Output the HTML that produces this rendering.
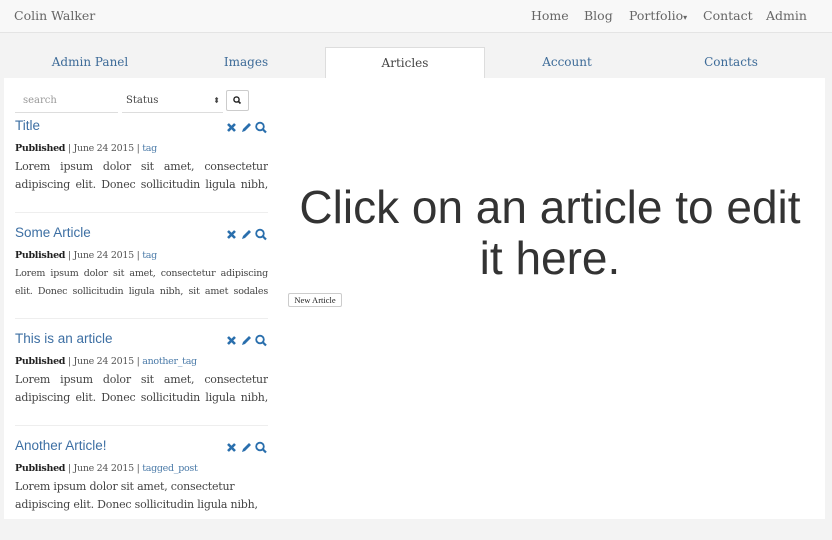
<!DOCTYPE html>
<html><head><meta charset="utf-8"><style>
*{margin:0;padding:0;box-sizing:border-box}
body{width:832px;height:540px;background:#f3f3f3;font-family:"DejaVu Serif","Liberation Serif",serif;position:relative;overflow:hidden}
.nav{position:absolute;left:0;top:0;width:832px;height:33px;background:#f8f8f8;border-bottom:1px solid #e4e4e4;font-size:12.5px;color:#666}
.nav span{position:absolute;top:8px}
.tab{position:absolute;top:47px;height:31px;width:160px;text-align:center;font-size:12px;color:#3d6b98;line-height:30px}
.tab.a{background:#fff;border:1px solid #ddd;border-bottom:none;color:#444}
.main{position:absolute;left:4px;top:78px;width:821px;height:441px;background:#fff}
.in{position:absolute;font-size:10px;color:#999}
.art{position:absolute;left:15px;width:253px}
.t{font-family:"Liberation Sans",sans-serif;font-size:13.5px;color:#3d6fa3;height:26px;line-height:18px}
.m{font-size:9.5px;color:#555;letter-spacing:-0.3px;height:12px;line-height:12px}
.m b{color:#222}.m a{color:#4a7aa8}
.b{font-size:11px;color:#444;line-height:18px;margin-top:3px;text-align:justify;height:39px;overflow:hidden;letter-spacing:-0.2px}
.ic{position:absolute;right:0;top:4px;width:42px;height:13px}
.sep{position:absolute;left:15px;width:253px;height:1px;background:#eee}
.big{position:absolute;left:284px;width:532px;top:182px;text-align:center;font-family:"Liberation Sans",sans-serif;font-size:46px;line-height:51px;color:#333}
</style></head><body>
<svg width="0" height="0" style="position:absolute"><defs><g id="ic"><path d="M2 3 L9 10 M9 3 L2 10" stroke="#2a6fad" stroke-width="2.6"/><path d="M16 11 L17 8 L23 2 L25 4 L19 10 Z" fill="#2a6fad"/><circle cx="34" cy="5.5" r="3.8" fill="none" stroke="#2a6fad" stroke-width="1.8"/><path d="M36.5 8 L40 11.5" stroke="#2a6fad" stroke-width="2.2"/></g></defs></svg>
<div class="nav"><span style="left:14px">Colin Walker</span><span style="left:531px">Home</span><span style="left:584px">Blog</span><span style="left:629px">Portfolio<small style="font-size:8px">▾</small></span><span style="left:703px">Contact</span><span style="left:766px">Admin</span></div>
<div class="tab" style="left:10px">Admin Panel</div>
<div class="tab" style="left:166px">Images</div>
<div class="tab a" style="left:325px">Articles</div>
<div class="tab" style="left:487px">Account</div>
<div class="tab" style="left:651px">Contacts</div>
<div class="main"></div>
<div class="in" style="left:15px;top:91px;width:103px;height:22px;border-bottom:1px solid #ddd;padding:4px 8px">search</div>
<div class="in" style="left:122px;top:91px;width:101px;height:22px;border-bottom:1px solid #ddd;padding:4px 4px;color:#444">Status<span style="position:absolute;right:3px;font-size:8px;top:5px">⬍</span></div>
<div style="position:absolute;left:226px;top:90px;width:23px;height:21px;border:1px solid #ccc;border-radius:2px"><svg width="21" height="19"><circle cx="9.5" cy="8.5" r="2.6" fill="none" stroke="#222" stroke-width="1.4"/><path d="M11.3 10.3 L13.5 12.5" stroke="#222" stroke-width="1.6"/></svg></div>

<div class="art" style="top:117px"><div class="t">Title</div><svg class="ic"><use href="#ic"/></svg><div class="m"><b>Published</b> | June 24 2015 | <a>tag</a></div><div class="b">Lorem ipsum dolor sit amet, consectetur adipiscing elit. Donec sollicitudin ligula nibh, sit amet sodales velit</div></div>
<div class="sep" style="top:212px"></div>
<div class="art" style="top:224px"><div class="t">Some Article</div><svg class="ic"><use href="#ic"/></svg><div class="m"><b>Published</b> | June 24 2015 | <a>tag</a></div><div class="b" style="font-size:9.5px">Lorem ipsum dolor sit amet, consectetur adipiscing elit. Donec sollicitudin ligula nibh, sit amet sodales velit</div></div>
<div class="sep" style="top:318px"></div>
<div class="art" style="top:330px"><div class="t">This is an article</div><svg class="ic"><use href="#ic"/></svg><div class="m"><b>Published</b> | June 24 2015 | <a>another_tag</a></div><div class="b">Lorem ipsum dolor sit amet, consectetur adipiscing elit. Donec sollicitudin ligula nibh, sit amet sodales velit</div></div>
<div class="sep" style="top:425px"></div>
<div class="art" style="top:437px"><div class="t">Another Article!</div><svg class="ic"><use href="#ic"/></svg><div class="m"><b>Published</b> | June 24 2015 | <a>tagged_post</a></div><div class="b" style="height:34px;text-align:left">Lorem ipsum dolor sit amet, consectetur adipiscing elit. Donec sollicitudin ligula nibh,</div></div>

<div class="big">Click on an article to edit it here.</div>
<div style="position:absolute;left:288px;top:293px;width:54px;height:14px;border:1px solid #ccc;border-radius:2px;font-size:8.5px;line-height:12px;text-align:center;color:#222;font-family:'Liberation Serif',serif">New Article</div>
</body></html>
